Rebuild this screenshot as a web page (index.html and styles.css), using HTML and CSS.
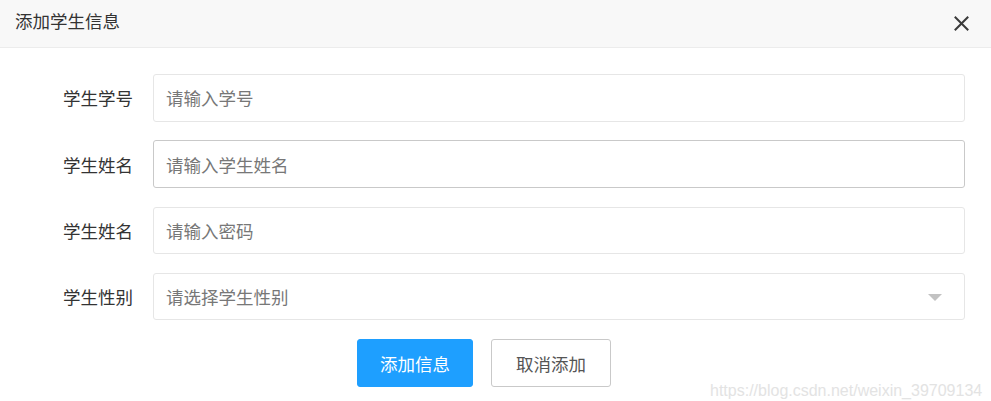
FILE: index.html
```html
<!DOCTYPE html>
<html lang="zh">
<head>
<meta charset="utf-8">
<title>添加学生信息</title>
<link rel="stylesheet" href="styles.css">
</head>
<body>
<div class="dialog">
  <div class="header">
    <span class="title">添加学生信息</span>
    <span class="close" aria-label="关闭">
      <svg width="15" height="15" viewBox="0 0 15 15"><path d="M1.5 1.5 L13.5 13.5 M13.5 1.5 L1.5 13.5" stroke="#3a3a3a" stroke-width="2" stroke-linecap="square" fill="none"/></svg>
    </span>
  </div>
  <form class="form">
    <div class="row">
      <label class="label">学生学号</label>
      <input class="input" type="text" placeholder="请输入学号">
    </div>
    <div class="row">
      <label class="label">学生姓名</label>
      <input class="input input-hover" type="text" placeholder="请输入学生姓名">
    </div>
    <div class="row">
      <label class="label">学生姓名</label>
      <input class="input" type="text" placeholder="请输入密码">
    </div>
    <div class="row">
      <label class="label">学生性别</label>
      <div class="input select">
        <span class="placeholder">请选择学生性别</span>
        <span class="caret"></span>
      </div>
    </div>
    <div class="actions">
      <button type="button" class="btn btn-primary">添加信息</button>
      <button type="button" class="btn btn-default">取消添加</button>
    </div>
  </form>
  <div class="watermark">https://blog.csdn.net/weixin_39709134</div>
</div>
</body>
</html>
```
FILE: styles.css
```css
* { box-sizing: border-box; }
html, body {
  margin: 0;
  padding: 0;
  background: #fff;
  font-family: "Noto Sans CJK SC", "Noto Sans", sans-serif;
}
.dialog {
  position: relative;
  width: 991px;
  height: 401px;
  overflow: hidden;
}
.header {
  height: 48px;
  background: #f8f8f8;
  border-bottom: 1px solid #ececec;
  display: flex;
  align-items: center;
  justify-content: space-between;
  padding: 0 22px 0 15px;
}
.title {
  font-size: 17.5px;
  color: #333;
  line-height: 1;
  margin-top: -6px;
}
.close {
  display: flex;
  width: 15px;
  height: 15px;
  margin-top: -1px;
}
.form {
  margin: 0;
  padding: 26px 26px 0 0;
}
.row {
  display: flex;
  align-items: center;
  height: 47.5px;
  margin-bottom: 18.75px;
}
.label {
  width: 153px;
  padding-right: 20px;
  text-align: right;
  font-size: 17.5px;
  color: #333;
  flex: none;
}
.input {
  flex: 1;
  height: 47.5px;
  border: 1px solid #e6e6e6;
  border-radius: 3px;
  padding: 0 12px;
  font-family: inherit;
  font-size: 17.5px;
  color: #333;
  background: #fff;
  outline: none;
}
.input::placeholder { color: #777; }
.input-hover { border-color: #c9c9c9; }
.select {
  display: flex;
  align-items: center;
  justify-content: space-between;
}
.placeholder { color: #777; }
.caret {
  width: 0;
  height: 0;
  border-left: 7.5px solid transparent;
  border-right: 7.5px solid transparent;
  border-top: 7.5px solid #c2c2c2;
  margin-right: 10px;
  margin-top: 2px;
}
.actions {
  display: flex;
  gap: 18px;
  padding-left: 357px;
}
.btn {
  height: 48px;
  border-radius: 3px;
  font-family: inherit;
  font-size: 17.5px;
  padding: 0;
  cursor: pointer;
}
.btn-primary {
  width: 116px;
  background: #1e9fff;
  border: 1px solid #1e9fff;
  color: #fff;
}
.btn-default {
  width: 120px;
  background: #fff;
  border: 1px solid #c9c9c9;
  color: #555;
}
.watermark {
  position: absolute;
  left: 710px;
  top: 382px;
  font-family: "Liberation Sans", Arial, sans-serif;
  font-size: 16px;
  color: #e3e3e3;
  white-space: nowrap;
}
```
